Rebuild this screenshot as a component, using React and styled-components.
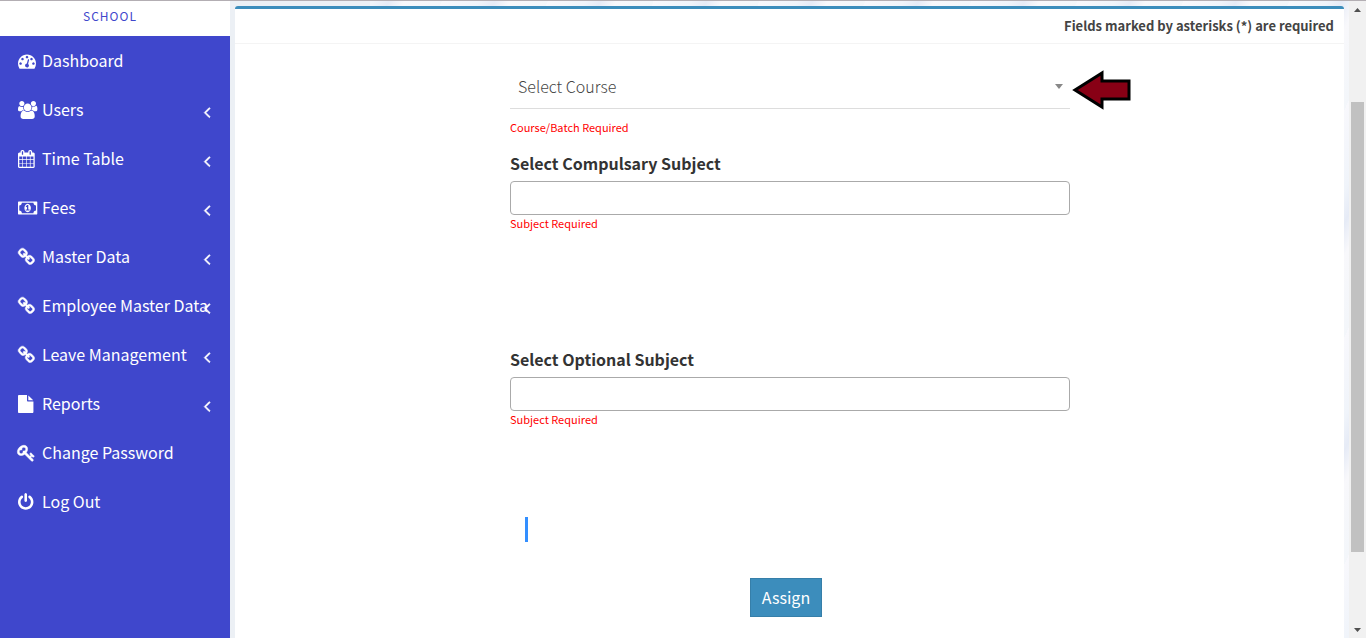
import React from "react";
import styled, { createGlobalStyle } from "styled-components";

const GlobalStyle = createGlobalStyle`
  * {
    box-sizing: border-box;
  }
  body {
    margin: 0;
    font-family: "Noto Sans CJK SC", "Open Sans", sans-serif;
    font-size: 16px;
    line-height: 24px;
    color: #333;
  }
`
const Page = styled.div`
  display: flex;
  min-height: 100vh;
  border-top: 1px solid #b3aeb3;
`
const Sidebar = styled.aside`
  width: 230px;
  flex-shrink: 0;
  background-color: #3f47cc;
`
const Brand = styled.div`
  height: 35px;
  padding: 3px 10px 0 0;
  background-color: white;
  color: #3f47cc;
  font-size: 12px;
  letter-spacing: 1px;
  text-align: center;
`
const Menu = styled.ul`
  list-style: none;
  margin: 0;
  padding: 0;
`
const MenuLink = styled.a`
  position: relative;
  display: flex;
  align-items: center;
  gap: 4px;
  height: 49px;
  padding-left: 18px;
  color: white;
  text-decoration: none;
  white-space: nowrap;
`
const MenuText = styled.span`
  padding-bottom: 2px;
`
const Icon = styled.svg`
  width: 20px;
  height: 18px;
  flex-shrink: 0;
  overflow: visible;
  fill: white;
  stroke: white;
  stroke-width: ${(props) => props.$weight};
`
const Chevron = styled.svg`
  position: absolute;
  top: 18px;
  right: 14px;
  width: 18px;
  height: 18px;
  fill: white;
  stroke: white;
  stroke-width: 60;
`
const Content = styled.main`
  flex: 1;
  display: flex;
  padding: 5px 5px 0;
  background:
    linear-gradient(90deg, #ecf0f5 0, #ecf0f5 140px, transparent 140px),
    repeating-linear-gradient(115deg, #f8f8fc 0, #f0f4fa 34px, #e6ebf6 48px, #f8f8fb 62px, #f3f6fa 96px);
`
const Box = styled.section`
  flex: 1;
  border-top: 3px solid #3c8dbc;
  border-radius: 3px 3px 0 0;
  background-color: white;
`
const BoxHeader = styled.header`
  height: 35px;
  padding: 5px 10px 0;
  border-bottom: 1px solid #f4f4f4;
  color: #444;
  font-size: 13px;
  font-weight: bold;
  text-align: right;
`
const FormRow = styled.div`
  display: grid;
  grid-template-columns: 1fr 2fr 1fr;
  margin: 0 -6px 0 -5px;
`
const Form = styled.form`
  grid-column: 2;
  display: flex;
  flex-direction: column;
  padding-top: 26px;
`
const SelectWrapper = styled.div`
  position: relative;
  display: flex;
  height: 39px;
  border-bottom: 1px solid #ddd;
`
const Select = styled.select`
  appearance: none;
  width: 100%;
  height: 32px;
  padding: 0 8px;
  border: none;
  background-color: transparent;
  color: #444;
  font-family: inherit;
  font-size: 16px;
  font-weight: 300;
`
const Caret = styled.svg`
  position: absolute;
  top: 14px;
  right: 7px;
  width: 8px;
  height: 5px;
  fill: #888;
  pointer-events: none;
`
const Pointer = styled.svg`
  position: absolute;
  top: 0;
  left: 100%;
  width: 64px;
  height: 40px;
  fill: #880015;
  stroke: black;
  stroke-width: 3;
`
const Field = styled.div`
  display: flex;
  flex-direction: column;
  min-height: ${(props) => props.$height};
`
const Label = styled.label`
  height: 29px;
  line-height: 22px;
  font-weight: bold;
`
const Input = styled.input`
  height: 34px;
  padding: 0 8px;
  border: 1px solid #aaa;
  border-radius: 4px;
  background-color: white;
  font-family: inherit;
  font-size: 16px;
`
const ErrorText = styled.span`
  color: red;
  font-size: 11px;
  line-height: 16px;
`
const CourseError = styled(ErrorText)`
  margin: 10px 0 17px;
`
const Marker = styled.div`
  width: 3px;
  height: 25px;
  margin: 0 0 36px 15px;
  background-color: #338fff;
`
const AssignButton = styled.button`
  align-self: center;
  height: 39px;
  margin-right: 8px;
  padding: 0 11px 1px;
  border: 1px solid #367fa9;
  background-color: #3c8dbc;
  color: white;
  font-family: inherit;
  font-size: 16px;
`
const Scrollbar = styled.div`
  display: flex;
  flex-direction: column;
  align-items: center;
  width: 17px;
  flex-shrink: 0;
  background-color: #f1f1f1;
`
const ScrollArrow = styled.svg`
  width: 17px;
  height: 17px;
  fill: #505050;
`
const Track = styled.div`
  flex: ${(props) => props.$size};
`
const Thumb = styled.div`
  flex: 450;
  width: 13px;
  background-color: #c1c1c1;
`

const icons = {
  dashboard: {
    x: 0,
    d: "M384 1152q0-53-37.500-90.500t-90.500-37.500-90.500 37.500-37.500 90.500 37.500 90.500 90.500 37.500 90.500-37.500 37.500-90.500zm192-448q0-53-37.500-90.500t-90.500-37.500-90.500 37.500-37.500 90.500 37.500 90.500 90.500 37.500 90.500-37.500 37.500-90.500zm428 481l101-382q6-26-7.500-48.500t-38.500-29.500-48 6.500-30 39.500l-101 382q-60 5-107 43.500t-63 98.500q-20 77 20 146t117 89 146-20 89-117q16-60-6-117t-72-91zm660-33q0-53-37.500-90.500t-90.500-37.500-90.500 37.500-37.500 90.500 37.500 90.500 90.500 37.500 90.500-37.500 37.500-90.500zm-640-640q0-53-37.500-90.500t-90.500-37.500-90.500 37.500-37.500 90.500 37.500 90.500 90.500 37.500 90.500-37.500 37.500-90.500zm448 192q0-53-37.500-90.500t-90.500-37.500-90.500 37.500-37.500 90.500 37.500 90.500 90.500 37.500 90.500-37.500 37.500-90.500zm320 448q0 261-141 483-19 29-54 29h-1402q-35 0-54-29-141-221-141-483 0-182 71-348t191-286 286-191 348-71 348 71 286 191 191 286 71 348z"
  },
  users: {
    x: 0,
    d: "M593 896q-162 5-265 128h-134q-82 0-138-40.500t-56-118.500q0-353 124-353 6 0 43.500 21t97.500 42.500 119 21.500q67 0 133-23-5 37-5 66 0 159 93 293zm1071 637q0 120-73 189.500t-194 69.500h-874q-121 0-194-69.500t-73-189.500q0-53 3.500-103.500t14-109 26.500-108.500 43-97.500 62-81 85.500-53.500 111.500-20q10 0 43 21.500t73 48 107 48 135 21.500 135-21.500 107-48 73-48 43-21.500q61 0 111.500 20t85.500 53.500 62 81 43 97.500 26.500 108.500 14 109 3.500 103.500zm-1024-1277q0 106-75 181t-181 75-181-75-75-181 75-181 181-75 181 75 75 181zm704 384q0 159-112.500 271.500t-271.500 112.500-271.500-112.500-112.500-271.500 112.500-271.500 271.500-112.500 271.500 112.500 112.500 271.500zm576 225q0 78-56 118.500t-138 40.500h-134q-103-123-265-128 93-134 93-293 0-29-5-66 66 23 133 23 59 0 119-21.500t97.500-42.500 43.500-21q124 0 124 353zm-128-609q0 106-75 181t-181 75-181-75-75-181 75-181 181-75 181 75 75 181z"
  },
  calendar: {
    x: 64,
    d: "M192 1664h288v-288h-288v288zm352 0h320v-288h-320v288zm-352-352h288v-320h-288v320zm352 0h320v-320h-320v320zm-352-384h288v-288h-288v288zm736 736h320v-288h-320v288zm-384-736h320v-288h-320v288zm768 736h288v-288h-288v288zm-384-352h320v-320h-320v320zm-352-864v-288q0-13-9.500-22.500t-22.500-9.500h-64q-13 0-22.500 9.500t-9.500 22.500v288q0 13 9.500 22.500t22.500 9.500h64q13 0 22.500-9.500t9.500-22.500zm736 864h288v-320h-288v320zm-384-384h320v-288h-320v288zm384 0h288v-288h-288v288zm32-480v-288q0-13-9.500-22.500t-22.500-9.500h-64q-13 0-22.500 9.500t-9.500 22.500v288q0 13 9.500 22.500t22.500 9.500h64q13 0 22.500-9.500t9.500-22.500zm384-64v1280q0 52-38 90t-90 38h-1408q-52 0-90-38t-38-90v-1280q0-52 38-90t90-38h128v-96q0-66 47-113t113-47h64q66 0 113 47t47 113v96h384v-96q0-66 47-113t113-47h64q66 0 113 47t47 113v96h128q52 0 90 38t38 90z"
  },
  money: {
    x: 0,
    d: "M768 1152h384v-96h-128v-448h-114l-148 137 77 80q42-37 55-57h2v288h-128v96zm512-256q0 70-21 142t-59.500 134-101.500 101-138 39-138-39-101.500-101-59.500-134-21-142 21-142 59.500-134 101.500-101 138-39 138 39 101.500 101 59.500 134 21 142zm512 256v-512q-106 0-181-75t-75-181h-1152q0 106-75 181t-181 75v512q106 0 181 75t75 181h1152q0-106 75-181t181-75zm128-832v1152q0 26-19 45t-45 19h-1792q-26 0-45-19t-19-45v-1152q0-26 19-45t45-19h1792q26 0 45 19t19 45z"
  },
  link: {
    x: 64,
    weight: 50,
    d: "M1520 1216q0-40-28-68l-208-208q-28-28-68-28-42 0-72 32 3 3 19 18.500t21.500 21.500 15 19 13 25.500 3.500 27.500q0 40-28 68t-68 28q-15 0-27.500-3.500t-25.500-13-19-15-21.500-21.500-18.500-19q-33 31-33 73 0 40 28 68l206 207q27 27 68 27 40 0 68-26l147-146q28-28 28-67zm-703-705q0-40-28-68l-206-207q-28-28-68-28-39 0-68 27l-147 146q-28 28-28 67 0 40 28 68l208 208q27 27 68 27 42 0 72-31-3-3-19-18.500t-21.500-21.500-15-19-13-25.500-3.500-27.500q0-40 28-68t68-28q15 0 27.500 3.500t25.500 13 19 15 21.500 21.500 18.500 19q33-31 33-73zm895 705q0 120-85 203l-147 146q-83 83-203 83-121 0-204-85l-206-207q-83-83-83-203 0-123 88-209l-88-88q-86 88-208 88-120 0-204-84l-208-208q-84-84-84-204t85-203l147-146q83-83 203-83 121 0 204 85l206 207q83 83 83 203 0 123-88 209l88 88q86-88 208-88 120 0 204 84l208 208q84 84 84 204z"
  },
  file: {
    x: 128,
    d: "M1152 512v-472q22 14 36 28l408 408q14 14 28 36h-472zm-128 32q0 40 28 68t68 28h544v1056q0 40-28 68t-68 28h-1344q-40 0-68-28t-28-68v-1600q0-40 28-68t68-28h800v544z"
  },
  key: {
    x: 64,
    weight: 50,
    d: "M832 512q0-80-56-136t-136-56-136 56-56 136q0 42 19 83-41-19-83-19-80 0-136 56t-56 136 56 136 136 56 136-56 56-136q0-42-19-83 41 19 83 19 80 0 136-56t56-136zm851 704q0 17-49 66t-66 49q-9 0-28.500-16t-36.500-33-38.500-40-24.500-26l-96 96 220 220q28 28 28 68 0 42-39 81t-81 39q-40 0-68-28l-671-671q-176 131-365 131-163 0-265.500-102.500t-102.500-265.500q0-160 95-313t248-248 313-95q163 0 265.500 102.500t102.500 265.500q0 189-131 365l355 355 96-96q-3-3-26-24.500t-40-38.500-33-36.500-16-28.500q0-17 49-66t66-49q13 0 23 10 6 6 46 44.500t82 79.500 86.500 86 73 78 28.500 41z"
  },
  power: {
    x: 128,
    d: "M1664 896q0 156-61 298t-164 245-245 164-298 61-298-61-245-164-164-245-61-298q0-182 80.500-343t226.500-270q43-32 95.500-25t83.500 50q32 42 24.500 94.500t-49.500 84.500q-98 74-151.500 181t-53.500 228q0 104 40.500 198.500t109.500 163.500 163.500 109.500 198.500 40.500 198.500-40.500 163.500-109.500 109.500-163.500 40.500-198.500q0-121-53.500-228t-151.500-181q-42-32-49.500-84.500t24.500-94.500q31-43 84-50t95 25q146 109 226.500 270t80.500 343zm-640-768v640q0 52-38 90t-90 38-90-38-38-90v-640q0-52 38-90t90-38 90 38 38 90z"
  }
}

const menuItems = [
  { name: "Dashboard", icon: "dashboard" },
  { name: "Users", icon: "users", submenu: true },
  { name: "Time Table", icon: "calendar", submenu: true },
  { name: "Fees", icon: "money", submenu: true },
  { name: "Master Data", icon: "link", submenu: true },
  { name: "Employee Master Data", icon: "link", submenu: true },
  { name: "Leave Management", icon: "link", submenu: true },
  { name: "Reports", icon: "file", submenu: true },
  { name: "Change Password", icon: "key" },
  { name: "Log Out", icon: "power" }
]

export default class App extends React.Component {
  state = {
    inputCompulsary: '',
    inputOptional: ''
  }
  onChangeCompulsary = (event) => {
    this.setState({ inputCompulsary: event.target.value })
  }
  onChangeOptional = (event) => {
    this.setState({ inputOptional: event.target.value })
  }
  onSubmit = (event) => {
    event.preventDefault()
  }
  render() {
    const renderMenu = menuItems.map((item) => {
      const icon = icons[item.icon]
      return <li key={item.name}>
        <MenuLink href="#">
          <Icon viewBox={`${icon.x} 0 1991 1792`} $weight={icon.weight || 0} aria-hidden="true">
            <path d={icon.d} />
          </Icon>
          <MenuText>{item.name}</MenuText>
          {item.submenu && <Chevron viewBox="0 0 1792 1792" aria-hidden="true">
            <path d="M1203 544q0 13-10 23l-393 393 393 393q10 10 10 23t-10 23l-50 50q-10 10-23 10t-23-10l-466-466q-10-10-10-23t10-23l466-466q10-10 23-10t23 10l50 50q10 10 10 23z" />
          </Chevron>}
        </MenuLink>
      </li>
    })
    return (
      <Page>
        <GlobalStyle />
        <Sidebar>
          <Brand>SCHOOL</Brand>
          <nav>
            <Menu>{renderMenu}</Menu>
          </nav>
        </Sidebar>
        <Content>
          <Box>
            <BoxHeader>Fields marked by asterisks (*) are required</BoxHeader>
            <FormRow>
              <Form onSubmit={this.onSubmit}>
                <SelectWrapper>
                  <Select aria-label="Select Course">
                    <option>Select Course</option>
                  </Select>
                  <Caret viewBox="0 0 8 5" aria-hidden="true">
                    <path d="M0 0h8L4 5z" />
                  </Caret>
                  <Pointer viewBox="0 0 64 40" aria-hidden="true">
                    <path d="M5 20L32 3v8h27v18H32v8z" />
                  </Pointer>
                </SelectWrapper>
                <CourseError>Course/Batch Required</CourseError>
                <Field $height="196px">
                  <Label htmlFor="compulsary">Select Compulsary Subject</Label>
                  <Input id="compulsary" value={this.state.inputCompulsary} onChange={this.onChangeCompulsary} />
                  <ErrorText>Subject Required</ErrorText>
                </Field>
                <Field $height="169px">
                  <Label htmlFor="optional">Select Optional Subject</Label>
                  <Input id="optional" value={this.state.inputOptional} onChange={this.onChangeOptional} />
                  <ErrorText>Subject Required</ErrorText>
                </Field>
                <Marker />
                <AssignButton type="submit">Assign</AssignButton>
              </Form>
            </FormRow>
          </Box>
        </Content>
        <Scrollbar aria-hidden="true">
          <ScrollArrow viewBox="0 0 17 17">
            <path d="M5 11h7L8.500 7z" />
          </ScrollArrow>
          <Track $size={84} />
          <Thumb />
          <Track $size={69} />
          <ScrollArrow viewBox="0 0 17 17">
            <path d="M5 7h7l-3.500 4z" />
          </ScrollArrow>
        </Scrollbar>
      </Page>
    )
  }
}
